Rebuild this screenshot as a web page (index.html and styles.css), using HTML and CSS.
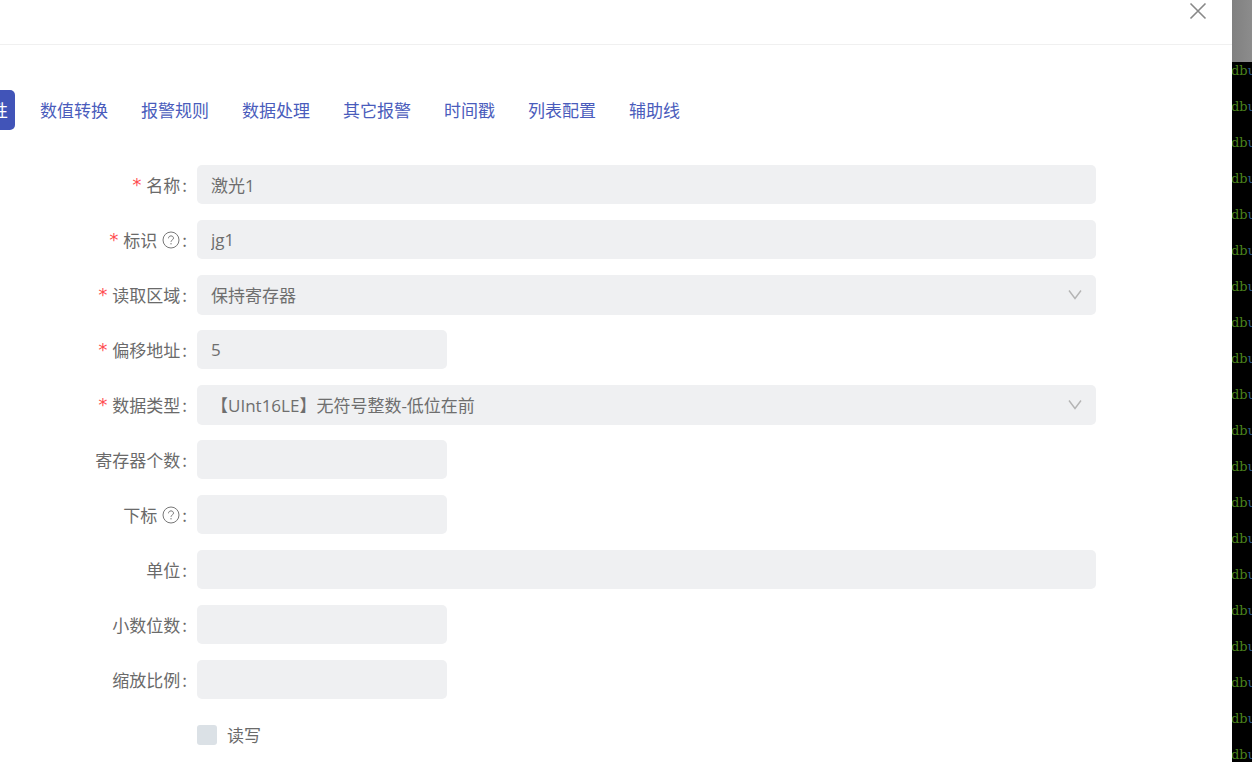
FILE: index.html
```html
<!DOCTYPE html>
<html lang="zh-CN">

<head>
    <meta charset="UTF-8">
    <meta name="viewport" content="width=device-width, initial-scale=1.0">
    <title>数据点配置</title>
    <link rel="stylesheet" href="styles.css">
</head>

<body>
    <!-- Drawer -->
    <main class="drawer">
        <header class="drawer-header">
            <button type="button" class="close-btn" aria-label="关闭">
                <svg width="18" height="18" viewBox="0 0 18 18"><path d="M1.5 1.5l15 15M16.5 1.5l-15 15"/></svg>
            </button>
        </header>

        <nav class="tabs">
            <a href="#attr" class="tab active">性</a>
            <a href="#convert" class="tab">数值转换</a>
            <a href="#rule" class="tab">报警规则</a>
            <a href="#process" class="tab">数据处理</a>
            <a href="#alarm" class="tab">其它报警</a>
            <a href="#time" class="tab">时间戳</a>
            <a href="#list" class="tab">列表配置</a>
            <a href="#line" class="tab">辅助线</a>
        </nav>

        <form class="form">
            <div class="row">
                <label for="name"><span class="required">*</span>名称<span class="colon">:</span></label>
                <input type="text" id="name" class="field" value="激光1">
            </div>
            <div class="row">
                <label for="ident"><span class="required">*</span>标识<svg class="help" width="18" height="18" viewBox="0 0 18 18"><circle cx="9" cy="9" r="8"/><path d="M6.5 7.3c0-1.5 1.1-2.4 2.5-2.4s2.5.9 2.5 2.2c0 1.9-2.5 1.8-2.5 3.7M9 12v1.4"/></svg><span class="colon">:</span></label>
                <input type="text" id="ident" class="field" value="jg1">
            </div>
            <div class="row">
                <label for="area"><span class="required">*</span>读取区域<span class="colon">:</span></label>
                <div class="select">
                    <select id="area" class="field">
                        <option>保持寄存器</option>
                    </select>
                    <svg class="arrow" width="14" height="12" viewBox="0 0 14 12"><path d="M1 1.5l6 8 6-8"/></svg>
                </div>
            </div>
            <div class="row">
                <label for="offset"><span class="required">*</span>偏移地址<span class="colon">:</span></label>
                <input type="text" id="offset" class="field short" value="5">
            </div>
            <div class="row">
                <label for="type"><span class="required">*</span>数据类型<span class="colon">:</span></label>
                <div class="select">
                    <select id="type" class="field">
                        <option>【UInt16LE】无符号整数-低位在前</option>
                    </select>
                    <svg class="arrow" width="14" height="12" viewBox="0 0 14 12"><path d="M1 1.5l6 8 6-8"/></svg>
                </div>
            </div>
            <div class="row">
                <label for="count">寄存器个数<span class="colon">:</span></label>
                <input type="text" id="count" class="field short">
            </div>
            <div class="row">
                <label for="index">下标<svg class="help" width="18" height="18" viewBox="0 0 18 18"><circle cx="9" cy="9" r="8"/><path d="M6.5 7.3c0-1.5 1.1-2.4 2.5-2.4s2.5.9 2.5 2.2c0 1.9-2.5 1.8-2.5 3.7M9 12v1.4"/></svg><span class="colon">:</span></label>
                <input type="text" id="index" class="field short">
            </div>
            <div class="row">
                <label for="unit">单位<span class="colon">:</span></label>
                <input type="text" id="unit" class="field">
            </div>
            <div class="row">
                <label for="decimals">小数位数<span class="colon">:</span></label>
                <input type="text" id="decimals" class="field short">
            </div>
            <div class="row">
                <label for="scale">缩放比例<span class="colon">:</span></label>
                <input type="text" id="scale" class="field short">
            </div>
            <div class="row check-row">
                <input type="checkbox" id="rw" class="checkbox">
                <label for="rw">读写</label>
            </div>
        </form>
    </main>

    <!-- Page behind the drawer -->
    <aside class="backdrop">
        <div class="mask"></div>
        <div class="terminal">
            <p>db<span>u</span></p>
            <p>db<span>u</span></p>
            <p>db<span>u</span></p>
            <p>db<span>u</span></p>
            <p>db<span>u</span></p>
            <p>db<span>u</span></p>
            <p>db<span>u</span></p>
            <p>db<span>u</span></p>
            <p>db<span>u</span></p>
            <p>db<span>u</span></p>
            <p>db<span>u</span></p>
            <p>db<span>u</span></p>
            <p>db<span>u</span></p>
            <p>db<span>u</span></p>
            <p>db<span>u</span></p>
            <p>db<span>u</span></p>
            <p>db<span>u</span></p>
            <p>db<span>u</span></p>
            <p>db<span>u</span></p>
            <p>db<span>u</span></p>
        </div>
    </aside>
</body>

</html>
```
FILE: styles.css
```css
* {
    box-sizing: border-box;
}

body {
    display: flex;
    height: 100vh;
    margin: 0;
    overflow: hidden;
    font-family: "Noto Sans CJK SC", sans-serif;
    font-size: 17px;
    color: #6a6a6a;
    background: #fff;
}

svg {
    fill: none;
    stroke: currentColor;
}

.drawer {
    flex: 1;
    min-width: 0;
    overflow: hidden;
}

.drawer-header {
    display: flex;
    justify-content: flex-end;
    height: 45px;
    padding-right: 25px;
    border-bottom: 1px solid #f0f0f0;
}

.close-btn {
    display: flex;
    height: 22px;
    padding: 2px 0 0;
    border: none;
    background: none;
    color: #888;
    stroke-width: 1.6;
    cursor: pointer;
}

.tabs {
    display: flex;
    gap: 33px;
    margin: 45px 0 35px -16px;
    line-height: 40px;
}

.tab {
    height: 40px;
    color: #4a5cbc;
    text-decoration: none;
}

.tab.active {
    margin-right: -8px;
    padding: 0 7px;
    border-radius: 5px;
    background: #4154b8;
    color: #fff;
}

.form {
    padding-right: 136px;
}

.row {
    display: flex;
    height: 40px;
    margin-bottom: 15px;
    line-height: 40px;
}

.row > label:first-child {
    display: flex;
    justify-content: flex-end;
    flex: 0 0 197px;
    padding-right: 10px;
}

.required {
    margin-right: 4px;
    color: #ff4d4f;
    font-family: "DejaVu Sans Mono", monospace;
    font-size: 18px;
}

.colon {
    margin-left: 2px;
}

.help {
    margin: 11px 0 0 5px;
    color: #777;
}

.field {
    flex: 1;
    width: 100%;
    height: 39px;
    padding: 0 14px;
    border: none;
    border-radius: 5px;
    background: #eff0f2;
    color: #6e6e6e;
    font-family: "Open Sans", "Noto Sans CJK SC", sans-serif;
    font-size: 17px;
}

.field.short {
    flex: 0 0 250px;
}

.select {
    position: relative;
    flex: 1;
}

.select .field {
    display: block;
    height: 40px;
    appearance: none;
}

.arrow {
    position: absolute;
    top: 14px;
    right: 14px;
    color: #b4b4b4;
    stroke-width: 1.4;
    pointer-events: none;
}

.check-row {
    align-items: center;
    gap: 10px;
    padding-left: 197px;
}

.checkbox {
    width: 20px;
    height: 20px;
    margin: 0;
    border-radius: 3px;
    background: #dbe1e6;
    appearance: none;
}

.backdrop {
    display: flex;
    flex-direction: column;
    flex: 0 0 20px;
    overflow: hidden;
}

.mask {
    flex: 0 0 62px;
    background: linear-gradient(to right, #808080, #8c8c8c);
}

.terminal {
    flex: 1;
    overflow: hidden;
    background: #000;
    color: #4a821c;
    font-family: "DejaVu Serif", serif;
    font-size: 13px;
}

.terminal p {
    height: 36px;
    margin: 0 0 0 -1px;
    line-height: 18px;
}

.terminal span {
    color: #2d5a8c;
}
```
